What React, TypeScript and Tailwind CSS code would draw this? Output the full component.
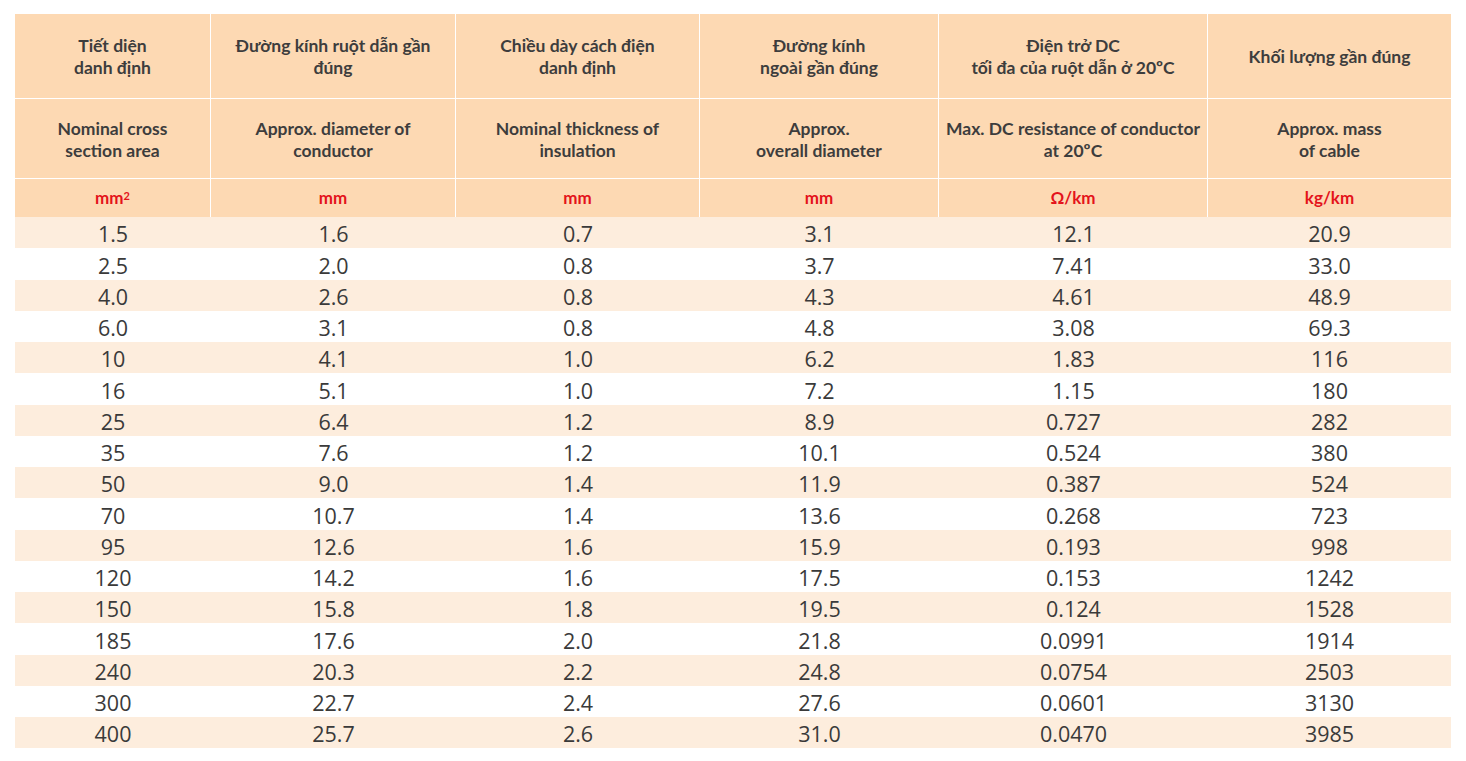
const cols = 'grid grid-cols-[196px_245px_244px_239px_269px_243px]'

const headVi = [
  ['Tiết diện', 'danh định'],
  ['Đường kính ruột dẫn gần', 'đúng'],
  ['Chiều dày cách điện', 'danh định'],
  ['Đường kính', 'ngoài gần đúng'],
  ['Điện trở DC', 'tối đa của ruột dẫn ở 20ºC'],
  ['Khối lượng gần đúng'],
]

const headEn = [
  ['Nominal cross', 'section area'],
  ['Approx. diameter of', 'conductor'],
  ['Nominal thickness of', 'insulation'],
  ['Approx.', 'overall diameter'],
  ['Max. DC resistance of conductor', 'at 20ºC'],
  ['Approx. mass', 'of cable'],
]

const rows = [
  ['1.5', '1.6', '0.7', '3.1', '12.1', '20.9'],
  ['2.5', '2.0', '0.8', '3.7', '7.41', '33.0'],
  ['4.0', '2.6', '0.8', '4.3', '4.61', '48.9'],
  ['6.0', '3.1', '0.8', '4.8', '3.08', '69.3'],
  ['10', '4.1', '1.0', '6.2', '1.83', '116'],
  ['16', '5.1', '1.0', '7.2', '1.15', '180'],
  ['25', '6.4', '1.2', '8.9', '0.727', '282'],
  ['35', '7.6', '1.2', '10.1', '0.524', '380'],
  ['50', '9.0', '1.4', '11.9', '0.387', '524'],
  ['70', '10.7', '1.4', '13.6', '0.268', '723'],
  ['95', '12.6', '1.6', '15.9', '0.193', '998'],
  ['120', '14.2', '1.6', '17.5', '0.153', '1242'],
  ['150', '15.8', '1.8', '19.5', '0.124', '1528'],
  ['185', '17.6', '2.0', '21.8', '0.0991', '1914'],
  ['240', '20.3', '2.2', '24.8', '0.0754', '2503'],
  ['300', '22.7', '2.4', '27.6', '0.0601', '3130'],
  ['400', '25.7', '2.6', '31.0', '0.0470', '3985'],
]

function HeadCell({ lines, h, last }: { lines: string[]; h: string; last: boolean }) {
  return (
    <div className={`${h} flex flex-col items-center justify-center text-center bg-[#fdd9b3] ${last ? '' : 'border-r border-white'}`}>
      {lines.map((l, i) => (
        <span key={i} className="block leading-[22px] whitespace-nowrap">{l}</span>
      ))}
    </div>
  )
}

export default function App() {
  return (
    <div className="min-h-screen bg-white pt-[14px] pl-[15px] font-['Lato','Open_Sans',sans-serif]">
      <div className="w-[1436px]">
        <div className={`${cols} text-[17.5px] font-bold text-[#3d3d3d] border-b border-white`}>
          {headVi.map((l, i) => (
            <HeadCell key={i} lines={l} h="h-[84px] pt-[2px]" last={i === 5} />
          ))}
        </div>
        <div className={`${cols} text-[17.5px] font-bold text-[#3d3d3d] border-b border-white`}>
          {headEn.map((l, i) => (
            <HeadCell key={i} lines={l} h="h-[79px] pt-[2px]" last={i === 5} />
          ))}
        </div>
        <div className={`${cols} text-[17px] font-bold text-[#e4131b]`}>
          {['mm', 'mm', 'mm', 'mm', 'Ω/km', 'kg/km'].map((u, i) => (
            <div key={i} className={`h-[38px] flex items-center justify-center bg-[#fdd9b3] ${i === 5 ? '' : 'border-r border-white'}`}>
              {u}
              {i === 0 && <sup className="text-[11px] relative -top-[2px]">2</sup>}
            </div>
          ))}
        </div>
        {rows.map((r, i) => (
          <div key={i} className={`${cols} h-[31.25px] text-[21.5px] text-[#3a3a3a] font-['Open_Sans',sans-serif] ${i % 2 === 0 ? 'bg-[#fdeddd]' : 'bg-white'}`}>
            {r.map((v, j) => (
              <div key={j} className="flex items-center justify-center leading-none pt-[3px]">{v}</div>
            ))}
          </div>
        ))}
      </div>
    </div>
  )
}
